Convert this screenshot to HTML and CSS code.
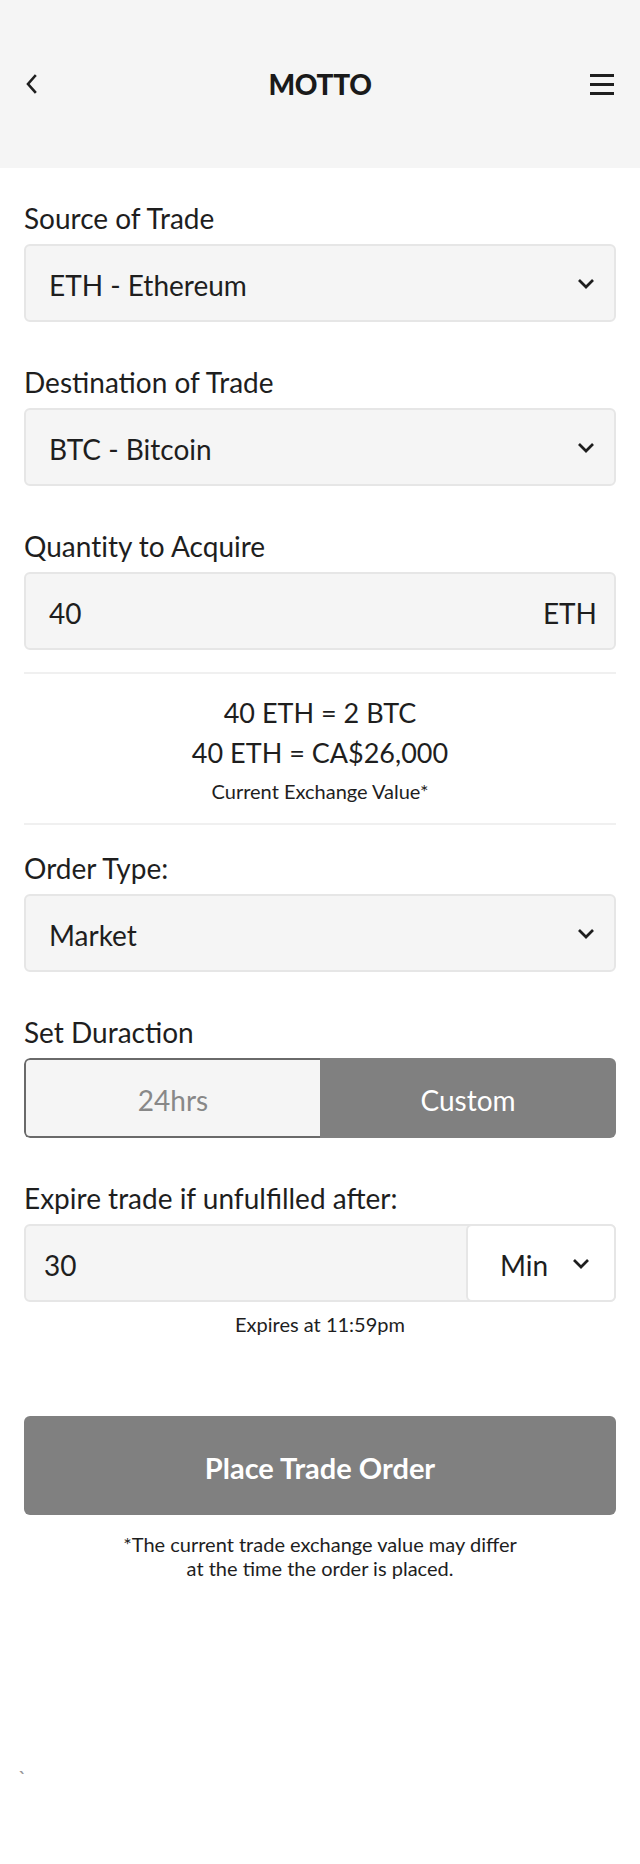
FILE: index.html
```html
<!DOCTYPE html>
<html lang="en">
<head>
<meta charset="utf-8">
<title>MOTTO - Trade</title>
<link rel="stylesheet" href="styles.css">
</head>
<body>
<header class="topbar">
  <span class="back">
    <svg width="12" height="20" viewBox="0 0 12 20"><path d="M10 2 L3 10 L10 18" fill="none" stroke="#1e1e1e" stroke-width="2.6" stroke-linecap="square"/></svg>
  </span>
  <h1 class="brand">MOTTO</h1>
  <span class="menu">
    <svg width="24" height="21" viewBox="0 0 24 21"><rect x="0" y="0" width="24" height="3" fill="#1e1e1e"/><rect x="0" y="9" width="24" height="3" fill="#1e1e1e"/><rect x="0" y="18" width="24" height="3" fill="#1e1e1e"/></svg>
  </span>
</header>

<main class="form">
  <div class="field first">
    <label class="label">Source of Trade</label>
    <div class="box select">
      <span>ETH - Ethereum</span>
      <svg class="chev" width="18" height="11" viewBox="0 0 18 11"><path d="M2 2 L9 9 L16 2" fill="none" stroke="#1e1e1e" stroke-width="2.7"/></svg>
    </div>
  </div>

  <div class="field">
    <label class="label">Destination of Trade</label>
    <div class="box select">
      <span>BTC - Bitcoin</span>
      <svg class="chev" width="18" height="11" viewBox="0 0 18 11"><path d="M2 2 L9 9 L16 2" fill="none" stroke="#1e1e1e" stroke-width="2.7"/></svg>
    </div>
  </div>

  <div class="field">
    <label class="label nolig">Quantity to Acquire</label>
    <div class="box select qty">
      <span>40</span>
      <span>ETH</span>
    </div>
  </div>

  <section class="exchange">
    <p class="rate">40 ETH = 2 BTC</p>
    <p class="rate">40 ETH = CA$26,000</p>
    <p class="small cev">Current Exchange Value*</p>
  </section>

  <div class="field after-divider">
    <label class="label">Order Type:</label>
    <div class="box select">
      <span>Market</span>
      <svg class="chev" width="18" height="11" viewBox="0 0 18 11"><path d="M2 2 L9 9 L16 2" fill="none" stroke="#1e1e1e" stroke-width="2.7"/></svg>
    </div>
  </div>

  <div class="field">
    <label class="label">Set Duraction</label>
    <div class="toggle">
      <span class="opt off">24hrs</span>
      <span class="opt on">Custom</span>
    </div>
  </div>

  <div class="field">
    <label class="label">Expire trade if unfulfilled after:</label>
    <div class="box split">
      <span class="num">30</span>
      <span class="unit">Min
        <svg class="chev" width="18" height="11" viewBox="0 0 18 11"><path d="M2 2 L9 9 L16 2" fill="none" stroke="#1e1e1e" stroke-width="2.7"/></svg>
      </span>
    </div>
    <p class="small expires">Expires at 11:59pm</p>
  </div>

  <button class="cta">Place Trade Order</button>
  <p class="small note">*The current trade exchange value may differ<br>at the time the order is placed.</p>

  <p class="tick">`</p>
</main>
</body>
</html>
```

FILE: styles.css
```css
* { box-sizing: border-box; }

body {
  margin: 0;
  background: #ffffff;
  color: #1e1e1e;
  font-family: Lato, "Open Sans", "Liberation Sans", sans-serif;
}

.topbar {
  height: 168px;
  background: #f5f5f5;
  display: grid;
  grid-template-columns: 1fr auto 1fr;
  align-items: center;
  padding: 0 26px;
}

.back { display: flex; justify-self: start; margin-top: -1px; margin-left: -1px; }
.menu { display: flex; justify-self: end; margin-top: 1px; }

.brand {
  margin: 0;
  font-size: 28px;
  font-weight: 900;
  letter-spacing: -0.3px;
  color: #1a1a1a;
}

.form {
  padding: 0 24px;
}

.field { margin-top: 44px; }
.field.first { margin-top: 34px; }
.field.after-divider { margin-top: 27px; }

.label {
  display: block;
  font-size: 28px;
  line-height: 32px;
  margin-bottom: 10px;
}

.nolig { font-variant-ligatures: none; }

.box {
  height: 78px;
  border: 2px solid #e6e6e6;
  border-radius: 6px;
  background: #f5f5f5;
  font-size: 28px;
}

.select {
  display: flex;
  align-items: center;
  justify-content: space-between;
  padding: 4px 19px 0 23px;
}

.select .chev { margin-top: -4px; }

.qty { padding-right: 17px; }

.exchange {
  margin-top: 22px;
  border-top: 2px solid #f0f0f0;
  border-bottom: 2px solid #f0f0f0;
  padding: 19px 0 20px;
  text-align: center;
}

.exchange p { margin: 0; }

.rate {
  font-size: 27px;
  line-height: 40px;
}

.small {
  font-size: 20px;
  line-height: 24px;
  text-align: center;
}

.cev { margin-top: 6px !important; }

.toggle {
  display: grid;
  grid-template-columns: 1fr 1fr;
  height: 80px;
  border-radius: 6px;
  overflow: hidden;
  font-size: 28px;
}

.opt {
  display: flex;
  align-items: center;
  justify-content: center;
  padding-top: 4px;
}

.opt.off {
  background: #f5f5f5;
  color: #888888;
  border: 2px solid #6a6a6a;
  border-right: none;
  border-radius: 6px 0 0 6px;
}

.opt.on {
  background: #808080;
  color: #ffffff;
}

.split {
  display: flex;
  align-items: stretch;
}

.num {
  flex: 1;
  display: flex;
  align-items: center;
  padding: 4px 0 0 18px;
}

.unit {
  width: 150px;
  margin: -2px -2px -2px 0;
  background: #ffffff;
  border: 2px solid #e6e6e6;
  border-radius: 6px;
  display: flex;
  align-items: center;
  padding: 4px 0 0 32px;
  gap: 24px;
}

.unit .chev { margin-top: -4px; }

.expires {
  margin: 10px 0 0;
}

.cta {
  display: block;
  width: 100%;
  height: 99px;
  margin-top: 80px;
  padding-top: 5px;
  border: none;
  border-radius: 6px;
  background: #808080;
  color: #ffffff;
  font-family: Lato, "Open Sans", "Liberation Sans", sans-serif;
  font-size: 29px;
  font-weight: 700;
}

.note {
  margin: 17px 0 0;
}

.tick {
  margin: 186px 0 0 -6px;
  font-size: 22px;
  line-height: 24px;
  color: #999999;
}
```
